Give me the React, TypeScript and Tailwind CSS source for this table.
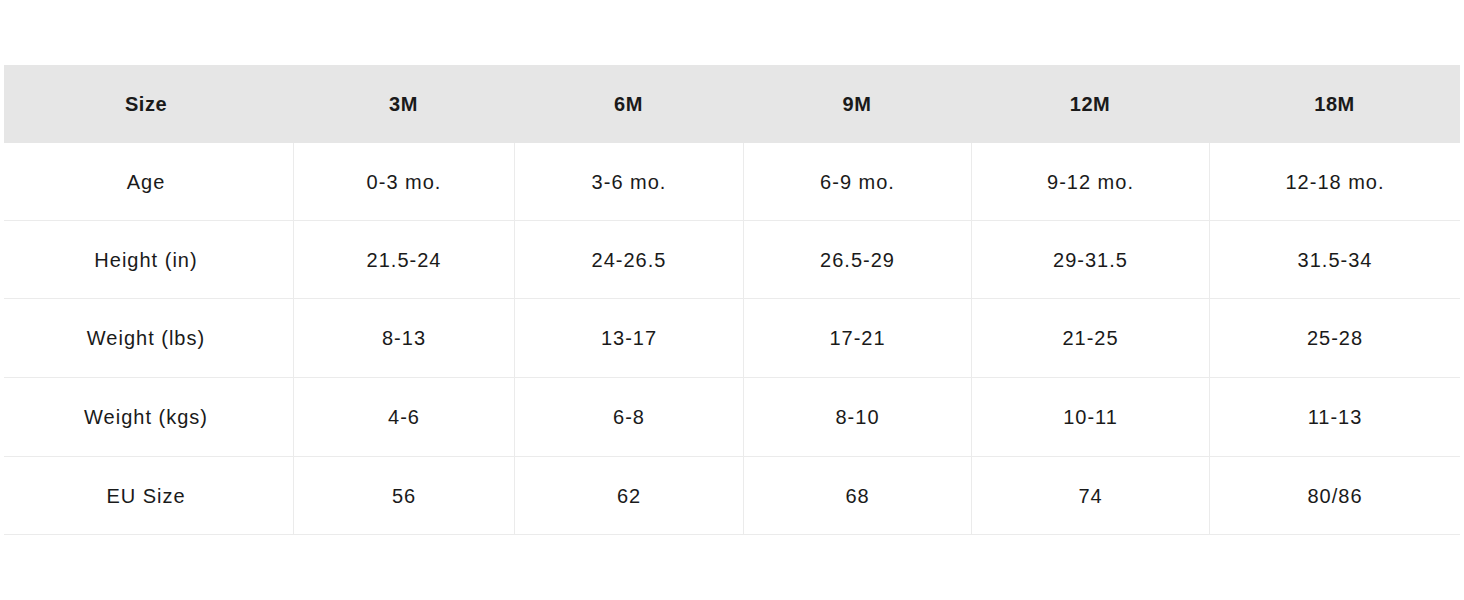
const columns = ["Size", "3M", "6M", "9M", "12M", "18M"];

const rows: { label: string; values: string[]; height: string }[] = [
  { label: "Age", values: ["0-3 mo.", "3-6 mo.", "6-9 mo.", "9-12 mo.", "12-18 mo."], height: "h-[78px]" },
  { label: "Height (in)", values: ["21.5-24", "24-26.5", "26.5-29", "29-31.5", "31.5-34"], height: "h-[78px]" },
  { label: "Weight (lbs)", values: ["8-13", "13-17", "17-21", "21-25", "25-28"], height: "h-[79px]" },
  { label: "Weight (kgs)", values: ["4-6", "6-8", "8-10", "10-11", "11-13"], height: "h-[79px]" },
  { label: "EU Size", values: ["56", "62", "68", "74", "80/86"], height: "h-[78px]" },
];

const grid = "grid grid-cols-[289px_221px_229px_228px_238px_251px]";

export default function App() {
  return (
    <div
      className="w-[1464px] h-[600px] bg-white pt-[65px] pl-[4px] text-[#1a1a1a]"
      style={{ fontFamily: '"Liberation Sans", Arial, sans-serif' }}
    >
      <div className="w-[1456px]">
        <div className={`${grid} h-[78px] bg-[#e6e6e6]`}>
          {columns.map((c, i) => (
            <div
              key={c}
              className={`flex items-center justify-center text-[20px] font-bold tracking-[0.5px] ${i === 0 ? "pr-[5px]" : ""}`}
            >
              {c}
            </div>
          ))}
        </div>
        {rows.map((row) => (
          <div key={row.label} className={`${grid} ${row.height} border-b border-[#ebebeb]`}>
            <div className="flex items-center justify-center pr-[5px] text-[20px] tracking-[1px]">
              {row.label}
            </div>
            {row.values.map((v, i) => (
              <div
                key={i}
                className="flex items-center justify-center text-[20px] tracking-[1px] border-l border-[#ebebeb]"
              >
                {v}
              </div>
            ))}
          </div>
        ))}
      </div>
    </div>
  );
}
